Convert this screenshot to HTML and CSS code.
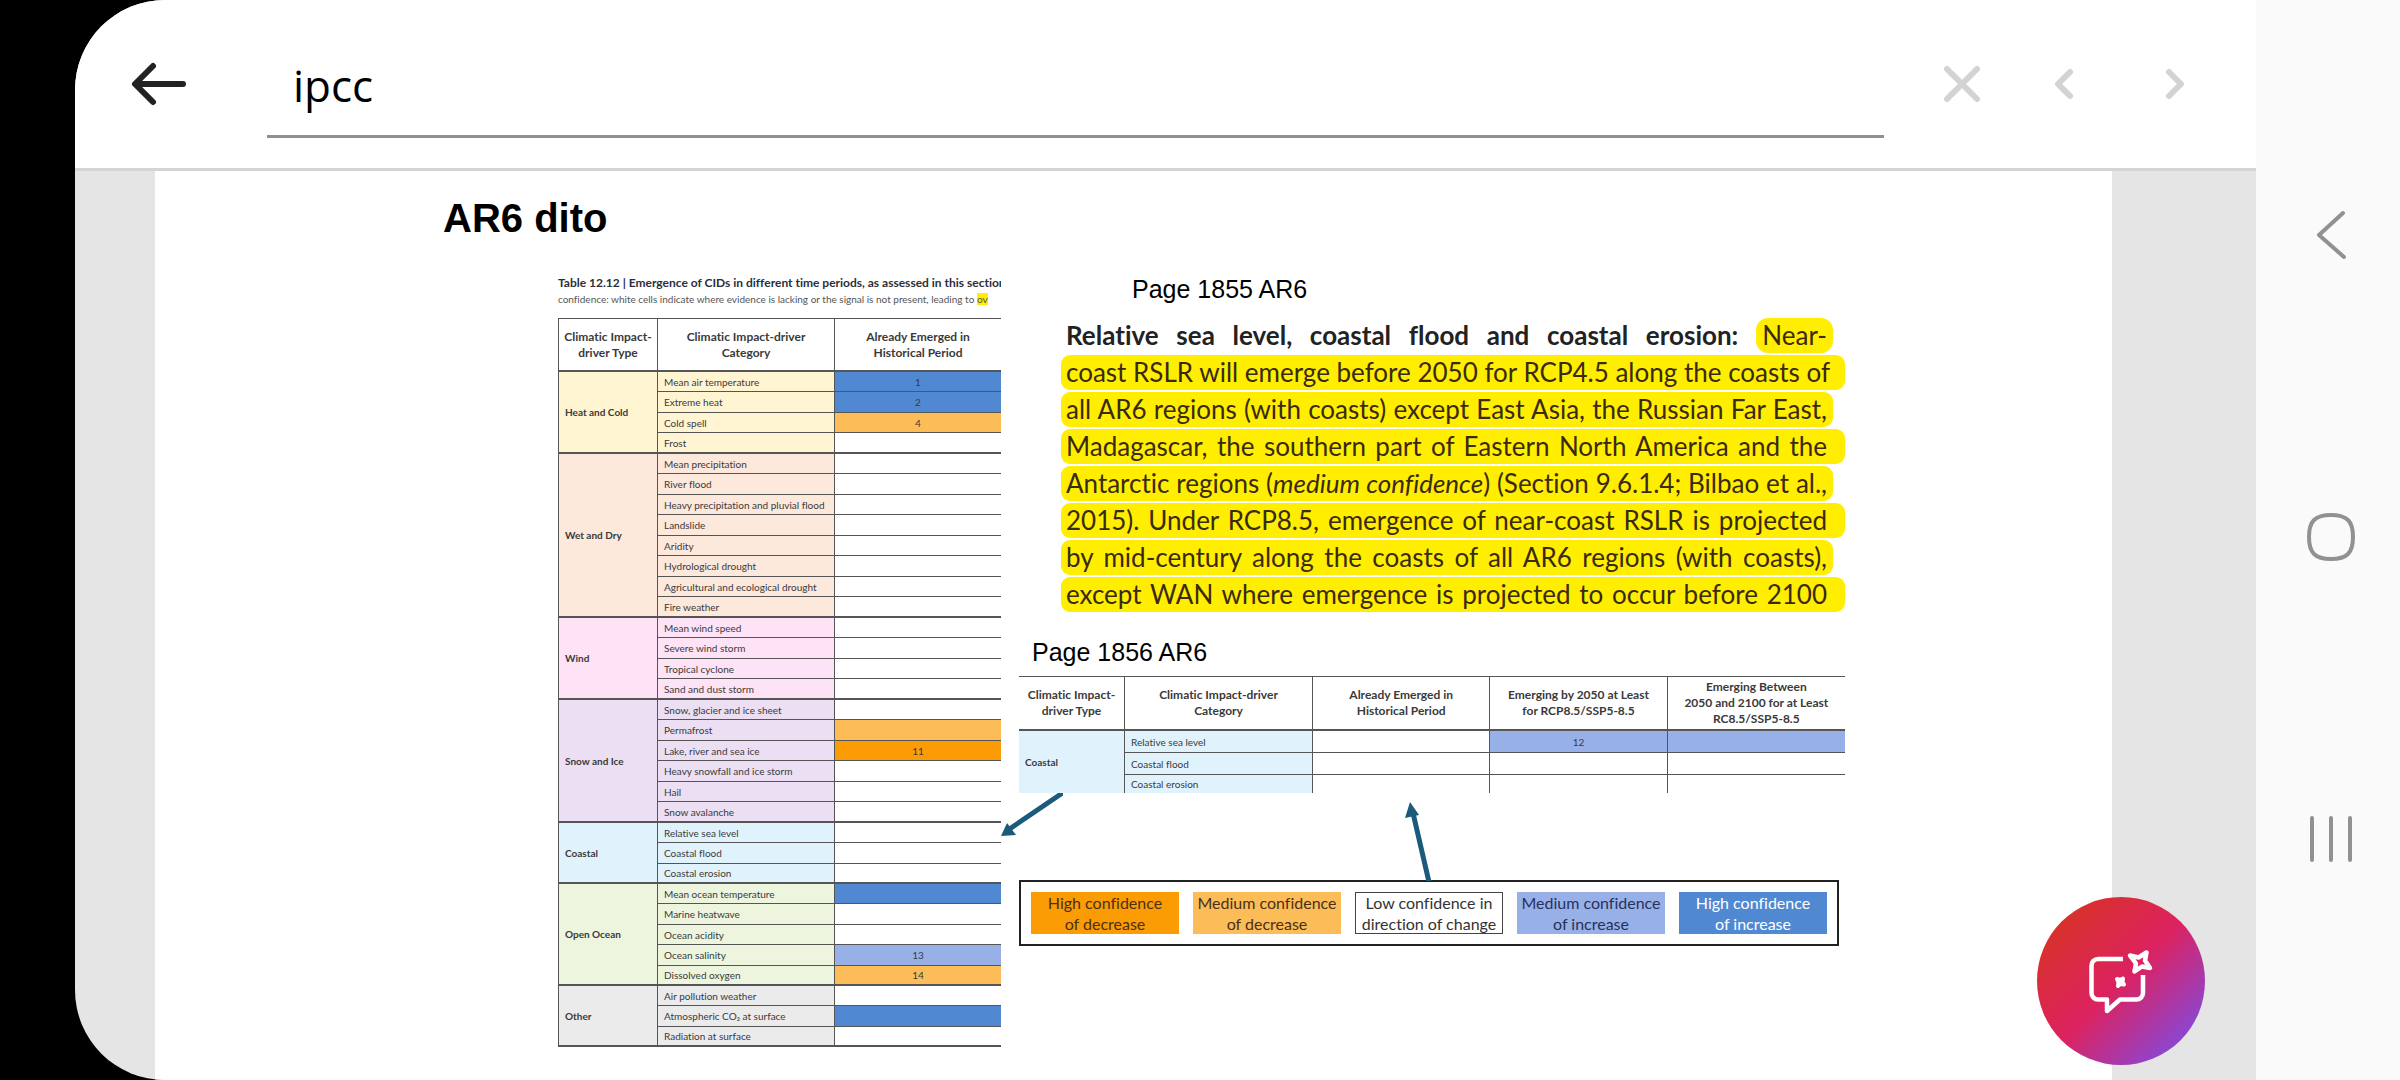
FILE: index.html
```html
<!DOCTYPE html>
<html lang="en">
<head>
    <meta charset="UTF-8" />
    <meta name="viewport" content="width=device-width, initial-scale=1" />
    <title>AR6 dito</title>
    <link rel="stylesheet" href="styles.css">
</head>
<body>
    <div class="app">
        <!-- Search bar -->
        <header class="search-bar">
            <button class="icon-btn" type="button" aria-label="Back">
                <svg width="60" height="60" viewBox="0 0 60 60" stroke="#222" stroke-width="6">
                    <path d="M54 30H7M24 12L6 30L24 48" />
                </svg>
            </button>
            <input class="search-input" type="text" value="ipcc" aria-label="Search in document" />
            <div class="search-actions">
                <button class="icon-btn clear" type="button" aria-label="Clear">
                    <svg width="48" height="48" viewBox="0 0 48 48" stroke="#d3d3d3" stroke-width="6">
                        <path d="M9 9L39 39M39 9L9 39" />
                    </svg>
                </button>
                <button class="icon-btn" type="button" aria-label="Previous result">
                    <svg width="48" height="48" viewBox="0 0 48 48" stroke="#d3d3d3" stroke-width="6">
                        <path d="M30 12L18 24L30 36" />
                    </svg>
                </button>
                <button class="icon-btn" type="button" aria-label="Next result">
                    <svg width="48" height="48" viewBox="0 0 48 48" stroke="#d3d3d3" stroke-width="6">
                        <path d="M18 12L30 24L18 36" />
                    </svg>
                </button>
            </div>
        </header>

        <!-- Document -->
        <main class="viewer">
            <article class="slide">
                <h1>AR6 dito</h1>
                <div class="columns">
                    <section class="emergence">
                        <div class="caption">
                            <p><b>Table 12.12 | Emergence of CIDs in different time periods, as assessed in this section</b></p>
                            <p class="note">confidence: white cells indicate where evidence is lacking or the signal is not present, leading to <mark>ov</mark></p>
                        </div>
                        <table class="cid-table">
                            <colgroup>
                                <col class="col-type"><col class="col-category"><col>
                            </colgroup>
                            <thead>
                                <tr>
                                    <th>Climatic Impact-<br>driver Type</th>
                                    <th>Climatic Impact-driver<br>Category</th>
                                    <th>Already Emerged in<br>Historical Period</th>
                                </tr>
                            </thead>
                            <tbody class="heat">
                                <tr><th rowspan="4">Heat and Cold</th><td>Mean air temperature</td><td class="high-inc">1</td></tr>
                                <tr><td>Extreme heat</td><td class="high-inc">2</td></tr>
                                <tr><td>Cold spell</td><td class="med-dec">4</td></tr>
                                <tr><td>Frost</td><td></td></tr>
                            </tbody>
                            <tbody class="wet">
                                <tr><th rowspan="8">Wet and Dry</th><td>Mean precipitation</td><td></td></tr>
                                <tr><td>River flood</td><td></td></tr>
                                <tr><td>Heavy precipitation and pluvial flood</td><td></td></tr>
                                <tr><td>Landslide</td><td></td></tr>
                                <tr><td>Aridity</td><td></td></tr>
                                <tr><td>Hydrological drought</td><td></td></tr>
                                <tr><td>Agricultural and ecological drought</td><td></td></tr>
                                <tr><td>Fire weather</td><td></td></tr>
                            </tbody>
                            <tbody class="wind">
                                <tr><th rowspan="4">Wind</th><td>Mean wind speed</td><td></td></tr>
                                <tr><td>Severe wind storm</td><td></td></tr>
                                <tr><td>Tropical cyclone</td><td></td></tr>
                                <tr><td>Sand and dust storm</td><td></td></tr>
                            </tbody>
                            <tbody class="snow">
                                <tr><th rowspan="6">Snow and Ice</th><td>Snow, glacier and ice sheet</td><td></td></tr>
                                <tr><td>Permafrost</td><td class="med-dec"></td></tr>
                                <tr><td>Lake, river and sea ice</td><td class="high-dec">11</td></tr>
                                <tr><td>Heavy snowfall and ice storm</td><td></td></tr>
                                <tr><td>Hail</td><td></td></tr>
                                <tr><td>Snow avalanche</td><td></td></tr>
                            </tbody>
                            <tbody class="coastal">
                                <tr><th rowspan="3">Coastal</th><td>Relative sea level</td><td></td></tr>
                                <tr><td>Coastal flood</td><td></td></tr>
                                <tr><td>Coastal erosion</td><td></td></tr>
                            </tbody>
                            <tbody class="ocean">
                                <tr><th rowspan="5">Open Ocean</th><td>Mean ocean temperature</td><td class="high-inc"></td></tr>
                                <tr><td>Marine heatwave</td><td></td></tr>
                                <tr><td>Ocean acidity</td><td></td></tr>
                                <tr><td>Ocean salinity</td><td class="med-inc">13</td></tr>
                                <tr><td>Dissolved oxygen</td><td class="med-dec">14</td></tr>
                            </tbody>
                            <tbody class="other">
                                <tr><th rowspan="3">Other</th><td>Air pollution weather</td><td></td></tr>
                                <tr><td>Atmospheric CO₂ at surface</td><td class="high-inc"></td></tr>
                                <tr><td>Radiation at surface</td><td></td></tr>
                            </tbody>
                        </table>
                    </section>

                    <section class="findings">
                        <h2 class="first">Page 1855 AR6</h2>
                        <div class="quote">
                            <p class="plain"><b>Relative sea level, coastal flood and coastal erosion:</b> <mark>Near-</mark></p>
                            <p class="long">coast RSLR will emerge before 2050 for RCP4.5 along the coasts of</p>
                            <p>all AR6 regions (with coasts) except East Asia, the Russian Far East,</p>
                            <p class="long">Madagascar, the southern part of Eastern North America and the</p>
                            <p>Antarctic regions (<i>medium confidence</i>) (Section 9.6.1.4; Bilbao et al.,</p>
                            <p class="long">2015). Under RCP8.5, emergence of near-coast RSLR is projected</p>
                            <p>by mid-century along the coasts of all AR6 regions (with coasts),</p>
                            <p class="long">except WAN where emergence is projected to occur before 2100</p>
                        </div>

                        <h2>Page 1856 AR6</h2>
                        <table class="cid-table coastal-table">
                            <colgroup>
                                <col class="col-type"><col class="col-category"><col><col><col>
                            </colgroup>
                            <thead>
                                <tr>
                                    <th>Climatic Impact-<br>driver Type</th>
                                    <th>Climatic Impact-driver<br>Category</th>
                                    <th>Already Emerged in<br>Historical Period</th>
                                    <th>Emerging by 2050 at Least<br>for RCP8.5/SSP5-8.5</th>
                                    <th>Emerging Between<br>2050 and 2100 for at Least<br>RC8.5/SSP5-8.5</th>
                                </tr>
                            </thead>
                            <tbody class="coastal">
                                <tr><th rowspan="3">Coastal</th><td>Relative sea level</td><td></td><td class="med-inc">12</td><td class="med-inc"></td></tr>
                                <tr><td>Coastal flood</td><td></td><td></td><td></td></tr>
                                <tr><td>Coastal erosion</td><td></td><td></td><td></td></tr>
                            </tbody>
                        </table>

                        <div class="arrows">
                            <svg class="arrow-left" width="64" height="46" viewBox="0 0 64 46">
                                <path d="M62 1L12 35" stroke="#1b5a7a" stroke-width="5" />
                                <path d="M2 43L8 30L17 42Z" fill="#1b5a7a" />
                            </svg>
                            <svg class="arrow-up" width="36" height="88" viewBox="0 0 36 88">
                                <path d="M29 89L13 20" stroke="#1b5a7a" stroke-width="5" />
                                <path d="M10 9L5 25L19 22Z" fill="#1b5a7a" />
                            </svg>
                        </div>

                        <ul class="legend">
                            <li class="high-dec">High confidence<br>of decrease</li>
                            <li class="med-dec">Medium confidence<br>of decrease</li>
                            <li class="low">Low confidence in<br>direction of change</li>
                            <li class="med-inc">Medium confidence<br>of increase</li>
                            <li class="high-inc">High confidence<br>of increase</li>
                        </ul>
                    </section>
                </div>
            </article>
        </main>

        <!-- AI assistant button -->
        <button class="assistant" type="button" aria-label="AI Assistant">
            <svg width="168" height="168" viewBox="0 0 168 168" stroke="#fff" stroke-width="4.5">
                <path stroke-linecap="butt" d="M86 62H61a6.500 6.500 0 0 0-6.500 6.500V96a6.500 6.500 0 0 0 6.500 6.500H70V114L83 102.500H99.500a6.500 6.500 0 0 0 6.500-6.500V78" />
                <path d="M93 58.500L101.500 60.500L109.500 55.500L108 63.500L113 71L105 69.500L97.500 74.500L99 66.500Z" />
                <path fill="#fff" stroke-width="4" d="M80 82L83.500 83L86 81.500L85.500 85L87 87.500L83.500 87L81 89L81.500 85.500Z" />
            </svg>
        </button>
    </div>

    <!-- System navigation -->
    <nav class="system-nav">
        <button class="icon-btn" type="button" aria-label="System back">
            <svg width="60" height="60" viewBox="0 0 60 60" stroke="#919191" stroke-width="4">
                <path d="M42 8L18 30L43 52" />
            </svg>
        </button>
        <button class="icon-btn" type="button" aria-label="Home">
            <svg width="60" height="60" viewBox="0 0 60 60" stroke="#919191" stroke-width="4">
                <path d="M30 8C46 8 52 14 52 30S46 52 30 52S8 46 8 30S14 8 30 8Z" />
            </svg>
        </button>
        <button class="icon-btn" type="button" aria-label="Recent apps">
            <svg width="60" height="60" viewBox="0 0 60 60" stroke="#919191" stroke-width="4">
                <path d="M11 9V51M30 9V51M49 9V51" />
            </svg>
        </button>
    </nav>
</body>
</html>
```
FILE: styles.css
```css
* {
    box-sizing: border-box;
    margin: 0;
    padding: 0;
}

body {
    display: flex;
    min-height: 100vh;
    padding-left: 75px;
    background: #000;
    color: #000;
    font-family: "Liberation Sans", Arial, sans-serif;
}

button {
    border: none;
    background: none;
    cursor: pointer;
}

svg {
    display: block;
    fill: none;
    stroke-linecap: round;
    stroke-linejoin: round;
}

.icon-btn {
    display: flex;
    flex: none;
    width: 96px;
    height: 96px;
    align-items: center;
    justify-content: center;
}

.app {
    position: relative;
    display: flex;
    flex: 1;
    flex-direction: column;
    min-width: 0;
    overflow: hidden;
    border-radius: 90px 0 0 90px;
    background: #e5e5e5;
}

/* Search bar */
.search-bar {
    display: flex;
    align-items: center;
    height: 171px;
    padding: 0 33px 0 36px;
    border-bottom: 3px solid #d4d4d4;
    background: #fff;
}

.search-input {
    flex: 1;
    min-width: 0;
    height: 108px;
    margin: 0 30px 0 60px;
    padding: 4px 26px 0;
    border: none;
    border-bottom: 3px solid #909090;
    outline: none;
    background: none;
    font-family: "Open Sans", sans-serif;
    font-size: 44px;
}

.search-actions {
    display: flex;
    gap: 15px;
}

.search-actions .clear {
    margin-right: -9px;
}

/* Document */
.viewer {
    display: flex;
    flex: 1;
    padding: 0 144px 0 80px;
}

.slide {
    flex: 1;
    min-width: 0;
    padding: 23px 267px 23px 288px;
    background: #fff;
}

h1 {
    font-size: 40px;
    line-height: 48px;
}

.columns {
    display: grid;
    grid-template-columns: 443fr 826fr;
    column-gap: 18px;
    margin-left: 115px;
    font-family: Lato, "Open Sans", sans-serif;
    font-variant-ligatures: none;
}

.emergence {
    min-width: 0;
    padding-top: 33px;
}

.caption {
    overflow: hidden;
    margin-bottom: 11px;
    font-size: 12px;
    line-height: 16px;
    white-space: nowrap;
    color: #555;
}

.caption b {
    color: #2c2f3a;
}

.caption .note {
    font-size: 10px;
}

mark {
    background: #fe0;
    color: inherit;
}

/* Tables */
.cid-table {
    width: 100%;
    border-spacing: 0;
    table-layout: fixed;
    border-top: 1px solid #555;
    border-left: 1px solid #555;
    color: #3a3a3a;
    font-size: 10px;
    line-height: 16px;
}

.col-type {
    width: 99px;
}

.col-category {
    width: 177px;
}

.cid-table th,
.cid-table td {
    border-right: 1px solid #555;
    border-bottom: 1px solid #555;
    white-space: nowrap;
}

.cid-table th:last-child,
.cid-table td:last-child {
    border-right: none;
}

.cid-table thead th {
    height: 53px;
    border-bottom-width: 2px;
    font-size: 12px;
}

.cid-table tbody tr {
    height: 20px;
}

.cid-table tbody tr:nth-child(even) {
    height: 21px;
}

.cid-table tbody th,
.cid-table tbody tr:last-child td {
    border-bottom-width: 2px;
}

.cid-table tbody th {
    padding-left: 6px;
    text-align: left;
}

.cid-table td {
    text-align: center;
}

.cid-table tr:first-child td:nth-child(2),
.cid-table tr:not(:first-child) td:first-child {
    padding-left: 6px;
    text-align: left;
}

.heat { background: #fff5d3; }
.wet { background: #fde8dc; }
.wind { background: #fde3f5; }
.snow { background: #ecdff3; }
.coastal { background: #e0f3fd; }
.ocean { background: #edf5de; }
.other { background: #ebebeb; }

/* Result cells are white unless they carry a confidence colour */
.cid-table td:nth-child(n + 3),
.cid-table tr:not(:first-child) td:nth-child(n + 2) {
    background: #fff;
}

.high-inc, .cid-table tbody tr td.high-inc:last-child { background: #5088d2; }
.med-dec, .cid-table tbody tr td.med-dec:last-child { background: #fcbc58; }
.high-dec, .cid-table tbody tr td.high-dec:last-child { background: #fb9c04; }
.med-inc, .cid-table tbody tr td.med-inc:nth-child(n) { background: #98b0e8; }

/* Right column */
.findings {
    min-width: 0;
    padding-top: 31px;
}

h2 {
    margin: 24px 0 8px 13px;
    font-family: "Liberation Sans", Arial, sans-serif;
    font-size: 25px;
    font-weight: normal;
    line-height: 32px;
}

h2.first {
    margin: 0 0 13px 113px;
}

.quote {
    margin: 0 12px 0 42px;
    color: #3a2a10;
    font-size: 26px;
    line-height: 35px;
}

.quote p {
    margin-bottom: 2px;
    padding: 0 6px 0 5px;
    border-radius: 9px;
    background: #fe0;
    text-align-last: justify;
    white-space: nowrap;
}

.quote .long {
    margin-right: -12px;
    padding-right: 18px;
}

.quote .plain {
    padding-right: 0;
    background: none;
}

.quote .plain b {
    color: #222;
}

.quote mark {
    display: inline-block;
    padding: 0 6px;
    border-radius: 12px;
}

.coastal-table {
    border-left: none;
}

.coastal-table .col-type {
    width: 106px;
}

.coastal-table .col-category {
    width: 188px;
}

.coastal-table tbody tr:nth-child(n) {
    height: 22px;
}

.coastal-table thead th {
    height: 54px;
}

.coastal-table tbody tr:last-child {
    height: 18px;
}

.coastal-table tbody tr th,
.coastal-table tbody tr:last-child td {
    border-bottom: none;
}

.arrows {
    display: flex;
    height: 87px;
}

.arrow-left {
    margin-left: -20px;
}

.arrow-up {
    margin-left: 337px;
}

.legend {
    display: grid;
    grid-template-columns: repeat(5, minmax(0, 1fr));
    gap: 14px;
    margin-right: 6px;
    padding: 10px;
    border: 2px solid #222;
    list-style: none;
    color: #4a3018;
    font-size: 16px;
    line-height: 21px;
    text-align: center;
    white-space: nowrap;
}

.legend .low {
    outline: 1px solid #444;
    outline-offset: -1px;
    color: #333;
}

.legend .med-inc {
    color: #26325c;
}

.legend .high-inc {
    color: #fff;
}

/* Floating button */
.assistant {
    position: absolute;
    right: 51px;
    bottom: 15px;
    border-radius: 50%;
    background: linear-gradient(135deg, #d73228 12%, #dc2260 50%, #8748d8 88%);
}

/* System navigation */
.system-nav {
    display: flex;
    flex: none;
    flex-direction: column;
    align-items: center;
    justify-content: center;
    gap: 206px;
    width: 144px;
    padding: 0 0 6px 6px;
    background: #fafafa;
}
```
